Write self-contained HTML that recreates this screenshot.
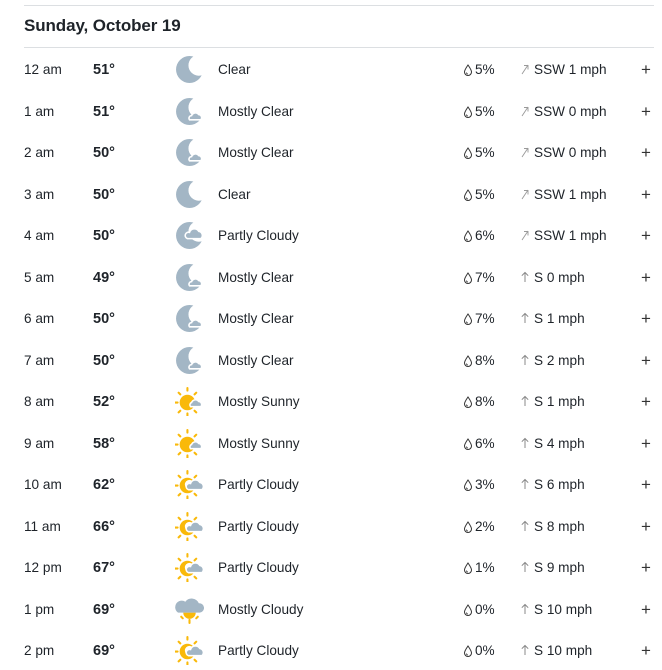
<!DOCTYPE html>
<html><head><meta charset="utf-8"><style>
body{margin:0;background:#fff;font-family:"Liberation Sans",Arial,sans-serif;color:#1e2329;width:662px;height:670px;overflow:hidden;position:relative}
.hl{position:absolute;left:24px;width:630px;height:1px;background:#dcdfe2}
.h{position:absolute;left:24px;top:16px;font-size:17px;font-weight:bold;color:#1e2329;letter-spacing:-0.1px}
.r{position:absolute;left:0;width:662px;height:20px;font-size:13.6px;line-height:20px}
.r span{position:absolute;top:0;white-space:nowrap}
.t{left:24px}.tp{left:93px;font-weight:bold;font-size:14.5px}.d{left:218px}
.p{left:475px}.w{left:534px}.pl{left:641px;font-size:17px;font-weight:300;color:#333}
.r svg{position:absolute}
</style></head><body>
<svg width="0" height="0" style="position:absolute">
<defs>
<mask id="cm"><rect width="28" height="28" fill="#fff"/><circle cx="23" cy="10" r="10" fill="#000"/></mask>
<symbol id="moon" viewBox="0 0 28 28"><circle cx="14" cy="14" r="13" fill="#a3b6c5" mask="url(#cm)"/></symbol>
<symbol id="mc" viewBox="0 0 28 28"><circle cx="14" cy="14" r="13" fill="#a3b6c5" mask="url(#cm)"/><path d="M14 22h11a3 3 0 0 0-2-5a4 4 0 0 0-7 1a2.5 2.5 0 0 0-2 4z" fill="#a3b6c5" stroke="#fff" stroke-width="1.5"/></symbol>
<symbol id="pcn" viewBox="0 0 28 28"><circle cx="14" cy="14" r="13" fill="#a3b6c5" mask="url(#cm)"/><path d="M12 17h13a4 4 0 0 0-2-7a5 5 0 0 0-9 1a3 3 0 0 0-2 6z" fill="#a3b6c5" stroke="#fff" stroke-width="1.5"/></symbol>
<g id="rays" stroke="#f9b90a" stroke-width="2" stroke-linecap="round"><path d="M12 1v2.5M12 25.5v2.5M0 15h2.5M3.5 5.5l1.6 1.6M20.5 5.5l-1.6 1.6M3.5 24.5l1.6-1.6M20.5 24.5l-1.6-1.6"/></g>
<symbol id="ms" viewBox="0 0 28 28"><use href="#rays"/><circle cx="12" cy="15" r="7.5" fill="#f9b90a"/><path d="M15 19h10a3 3 0 0 0-2-5a4 4 0 0 0-7 1a2.5 2.5 0 0 0-1 4z" fill="#a3b6c5" stroke="#fff" stroke-width="1.5"/></symbol>
<symbol id="pc" viewBox="0 0 28 28"><use href="#rays"/><circle cx="12" cy="15" r="7.5" fill="#f9b90a"/><circle cx="14" cy="14" r="4.5" fill="#fff"/><path d="M13 19h13a4 4 0 0 0-2-7a5 5 0 0 0-9 1a3 3 0 0 0-2 6z" fill="#a3b6c5" stroke="#fff" stroke-width="1.5"/></symbol>
<symbol id="mcl" viewBox="0 0 28 28"><g stroke="#f9b90a" stroke-width="2" stroke-linecap="round"><path d="M14 24v3M6 21l1.5 1.5M22 21l-1.5 1.5"/></g><path d="M8 17a6 6 0 0 0 12 0z" fill="#f9b90a"/><path d="M3 17h21a4.5 4.5 0 0 0-1-9a7.5 7.5 0 0 0-13-1.5a5 5 0 0 0-7 10.5z" fill="#a3b6c5"/></symbol>
<symbol id="drop" viewBox="0 0 10 12"><path d="M5 1C3 4 1.5 6 1.5 8a3.5 3.5 0 0 0 7 0C8.5 6 7 4 5 1z" fill="none" stroke="#333" stroke-width="1"/><path d="M3.5 8.5a1.5 1.5 0 0 0 1.5 1.5" fill="none" stroke="#333" stroke-width="0.8"/></symbol>
<symbol id="up" viewBox="0 0 10 12"><path d="M5 11V1.5M1.8 4.7L5 1.5l3.2 3.2" fill="none" stroke="#888" stroke-width="1"/></symbol>
<symbol id="ur" viewBox="0 0 10 12"><path d="M2 11L8 2M4 2.5h4v4" fill="none" stroke="#999" stroke-width="0.9"/></symbol>
</defs></svg>
<div class="hl" style="top:5px"></div>
<div class="h">Sunday, October 19</div>
<div class="hl" style="top:47px"></div>
<div id="rows"></div>
<script>
var d=[["12 am","51°","moon","Clear","5%","ur","SSW 1 mph"],["1 am","51°","mc","Mostly Clear","5%","ur","SSW 0 mph"],["2 am","50°","mc","Mostly Clear","5%","ur","SSW 0 mph"],["3 am","50°","moon","Clear","5%","ur","SSW 1 mph"],["4 am","50°","pcn","Partly Cloudy","6%","ur","SSW 1 mph"],["5 am","49°","mc","Mostly Clear","7%","up","S 0 mph"],["6 am","50°","mc","Mostly Clear","7%","up","S 1 mph"],["7 am","50°","mc","Mostly Clear","8%","up","S 2 mph"],["8 am","52°","ms","Mostly Sunny","8%","up","S 1 mph"],["9 am","58°","ms","Mostly Sunny","6%","up","S 4 mph"],["10 am","62°","pc","Partly Cloudy","3%","up","S 6 mph"],["11 am","66°","pc","Partly Cloudy","2%","up","S 8 mph"],["12 pm","67°","pc","Partly Cloudy","1%","up","S 9 mph"],["1 pm","69°","mcl","Mostly Cloudy","0%","up","S 10 mph"],["2 pm","69°","pc","Partly Cloudy","0%","up","S 10 mph"]];
var h="";d.forEach(function(r,i){var y=Math.round(60+i*41.5);
h+='<div class="r" style="top:'+y+'px"><span class="t">'+r[0]+'</span><span class="tp">'+r[1]+'</span><svg style="left:175px;top:-5px" width="29" height="29"><use href="#'+r[2]+'"/></svg><span class="d">'+r[3]+'</span><svg style="left:463px;top:4px" width="10" height="12"><use href="#drop"/></svg><span class="p">'+r[4]+'</span><svg style="left:520px;top:3px" width="10" height="12"><use href="#'+r[5]+'"/></svg><span class="w">'+r[6]+'</span><span class="pl">+</span></div>';});
document.getElementById("rows").innerHTML=h;
</script>
</body></html>
